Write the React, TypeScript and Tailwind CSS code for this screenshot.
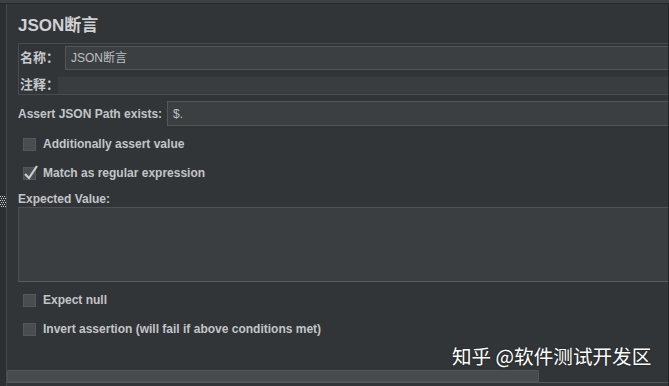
const font = "font-['Liberation_Sans','Noto_Sans_CJK_SC',sans-serif]";

const CheckBox = ({ checked }: { checked?: boolean }) => (
  <div className="relative w-[13px] h-[13px] bg-[#4a4d50] border border-[#55585b] shrink-0">
    {checked && (
      <svg className="absolute -left-[1px] -top-[4px]" width="16" height="17" viewBox="0 0 16 17">
        <path d="M2 10 L6 14 L14 2" fill="none" stroke="#c9ccce" strokeWidth="2.2" />
      </svg>
    )}
  </div>
);

const CheckRow = ({ label, checked, className }: { label: string; checked?: boolean; className?: string }) => (
  <div className={`flex items-center h-[24px] pl-[5px] gap-[7px] ${className ?? ''}`}>
    <CheckBox checked={checked} />
    <span className="text-[12px] font-bold text-[#c2c5c8] whitespace-nowrap">{label}</span>
  </div>
);

export default function App() {
  return (
    <div className={`w-[669px] h-[386px] bg-[#323538] flex flex-col overflow-hidden relative ${font}`}>
      <div className="h-[3px] bg-[#3e4143] shrink-0" />
      <div className="h-[1px] bg-[#26282a] shrink-0" />
      <div className="flex flex-1 min-h-0">
        {/* left splitter strip */}
        <div className="w-[7px] bg-[#2c2f31] border-r border-[#46494b] flex flex-col shrink-0">
          <svg className="mt-[192px]" width="6" height="12" viewBox="0 0 6 12">
            {[0, 2, 4, 6, 8, 10].map((y) =>
              [0, 2, 4].map((x) => (
                <rect key={`${x}-${y}`} x={x + (y % 4 === 0 ? 0 : 1)} y={y} width="1" height="1" fill="#d0d0d0" />
              ))
            )}
          </svg>
        </div>

        <div className="flex-1 flex flex-col min-w-0 border-r border-[#222426]">
          <div className="pl-[11px] flex flex-col">
            <div className="mt-[10px] h-[24px] leading-[24px] text-[17px] font-bold text-[#cfd1d3]">JSON断言</div>

            <div className="mt-[5px] h-[52px] border border-[#4a4d4f] border-r-0 flex flex-col">
              <div className="mt-[2px] flex items-center h-[24px]">
                <span className="w-[46px] shrink-0 pl-[1px] text-[13px] font-bold text-[#c6c9cb] whitespace-nowrap">名称：</span>
                <div className="flex-1 h-[24px] bg-[#3c3f41] border border-[#53575a] border-r-0 flex items-center pl-[5px] text-[12px] text-[#bcc0c3]">
                  JSON断言
                </div>
              </div>
              <div className="mt-[6px] flex items-center h-[18px]">
                <span className="w-[39px] shrink-0 pl-[1px] text-[13px] font-bold text-[#c6c9cb] whitespace-nowrap">注释：</span>
                <div className="flex-1 h-[18px] bg-[#3a3d3f] border-t border-[#36393b]" />
              </div>
            </div>

            <div className="mt-[6px] flex items-center h-[25px]">
              <span className="w-[149px] shrink-0 text-[12px] font-bold text-[#c2c5c8] whitespace-nowrap">Assert JSON Path exists:</span>
              <div className="flex-1 h-[25px] bg-[#3c3f41] border border-[#53575a] border-r-0 flex items-center pl-[5px] text-[12px] text-[#bcc0c3]">
                $.
              </div>
            </div>

            <CheckRow className="mt-[6px]" label="Additionally assert value" />
            <CheckRow className="mt-[5px]" label="Match as regular expression" checked />

            <div className="mt-[6px] h-[16px] leading-[16px] text-[12px] font-bold text-[#c2c5c8]">Expected Value:</div>
            <div className="h-[75px] bg-[#3b3e40] border border-[#4e5153] border-b-[#5c5f61] border-r-0" />

            <CheckRow className="mt-[6px]" label="Expect null" />
            <CheckRow className="mt-[5px]" label="Invert assertion (will fail if above conditions met)" />
          </div>

          <div className="mt-auto mb-[3px] flex flex-col">
            <div className="h-[12px] w-[532px] bg-[#484b4e] border border-[#525558] rounded-[1px]" />
            <div className="h-[1px] bg-[#55585a]" />
          </div>
        </div>
      </div>

      <div className="absolute left-[452px] top-[343px] text-[19.6px] leading-[26px] text-white font-['Noto_Sans_CJK_SC',sans-serif] [text-shadow:0_0_2px_rgba(0,0,0,0.6)] whitespace-nowrap">
        知乎 @软件测试开发区
      </div>
    </div>
  );
}
